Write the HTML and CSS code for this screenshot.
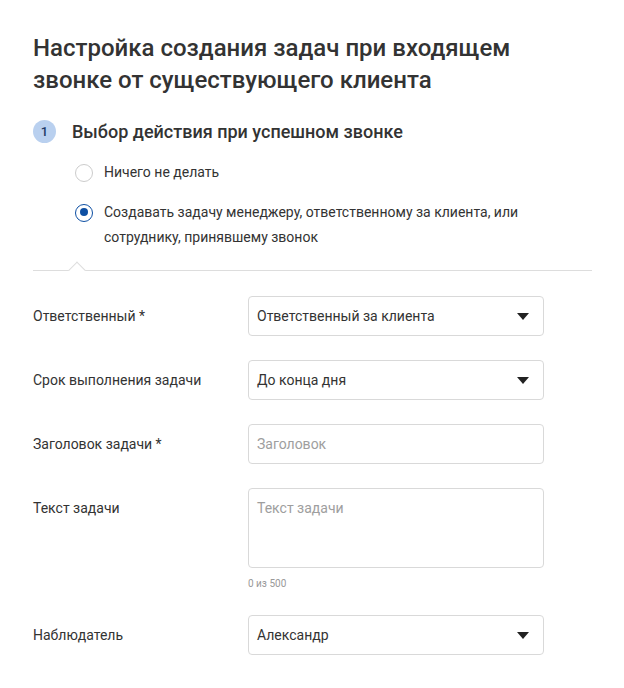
FILE: index.html
```html
<!DOCTYPE html>
<html lang="ru">
<head>
<meta charset="utf-8">
<link rel="stylesheet" href="styles.css">
</head>
<body>
<div class="page">
  <h1 class="title">Настройка создания задач при входящем звонке от существующего клиента</h1>
  <div class="step">
    <span class="badge">1</span>
    <span class="step-title">Выбор действия при успешном звонке</span>
  </div>
  <div class="options">
    <label class="radio"><span class="dot"></span><span class="rtext">Ничего не делать</span></label>
    <label class="radio checked"><span class="dot"></span><span class="rtext">Создавать задачу менеджеру, ответственному за клиента, или сотруднику, принявшему звонок</span></label>
  </div>
  <div class="divider"><span class="notch"></span></div>
  <div class="form">
    <div class="row">
      <div class="label">Ответственный *</div>
      <div class="select"><span>Ответственный за клиента</span><span class="caret"></span></div>
    </div>
    <div class="row">
      <div class="label">Срок выполнения задачи</div>
      <div class="select"><span>До конца дня</span><span class="caret"></span></div>
    </div>
    <div class="row">
      <div class="label">Заголовок задачи *</div>
      <div class="input placeholder">Заголовок</div>
    </div>
    <div class="row top">
      <div class="label">Текст задачи</div>
      <div class="field">
        <div class="textarea placeholder">Текст задачи</div>
        <div class="counter">0 из 500</div>
      </div>
    </div>
    <div class="row">
      <div class="label">Наблюдатель</div>
      <div class="select"><span>Александр</span><span class="caret"></span></div>
    </div>
  </div>
</div>
</body>
</html>
```

FILE: styles.css
```css
* { box-sizing: border-box; }
html, body { margin: 0; padding: 0; background: #fff; }
body { font-family: Roboto, "Noto Sans", sans-serif; color: #333; }
.page { padding: 32px 32px 0 33px; width: 624px; }
.title { margin: 0; font-size: 24px; line-height: 32px; font-weight: 500; color: #333; width: 500px; }
.step { display: flex; align-items: center; margin-top: 23px; height: 24px; }
.badge { width: 23px; height: 23px; border-radius: 50%; background: #b9d0ef; color: #1f3a66; font-size: 13px; font-weight: 500; display: flex; align-items: center; justify-content: center; }
.step-title { margin-left: 16px; font-size: 18px; font-weight: 500; color: #333; }
.options { padding-left: 42px; margin-top: 17px; display: flex; flex-direction: column; gap: 15px; }
.radio { display: flex; align-items: flex-start; font-size: 14px; line-height: 25px; color: #333; }
.dot { flex: none; width: 18px; height: 18px; border-radius: 50%; border: 1px solid #ccc; margin-top: 3.5px; margin-right: 11px; position: relative; }
.radio.checked .dot { border: 1.5px solid #0d4fa3; }
.radio.checked .dot::after { content: ""; position: absolute; left: 3.5px; top: 3.5px; width: 8px; height: 8px; border-radius: 50%; background: #0d4fa3; }
.rtext { width: 420px; }
.divider { margin-top: 20px; height: 1px; background: #ddd; width: 559px; position: relative; }
.notch { position: absolute; left: 38px; top: -6px; width: 12px; height: 12px; background: #fff; border-left: 1px solid #ddd; border-top: 1px solid #ddd; transform: rotate(45deg); }
.form { margin-top: 25px; display: flex; flex-direction: column; gap: 24px; }
.row { display: flex; align-items: center; }
.row.top { align-items: flex-start; }
.label { width: 215px; font-size: 14px; color: #333; }
.row.top .label { padding-top: 12px; }
.select, .input, .textarea { width: 296px; height: 40px; border: 1px solid #d9d9d9; border-radius: 4px; font-size: 14px; padding: 0 8px; display: flex; align-items: center; justify-content: space-between; color: #333; }
.placeholder { color: #9e9e9e; }
.textarea { height: 80px; align-items: flex-start; padding-top: 11px; }
.caret { width: 0; height: 0; border-left: 6px solid transparent; border-right: 6px solid transparent; border-top: 7px solid #222; margin-right: 6px; }
.counter { font-size: 10px; color: #999; margin-top: 9px; line-height: 14px; }
```
